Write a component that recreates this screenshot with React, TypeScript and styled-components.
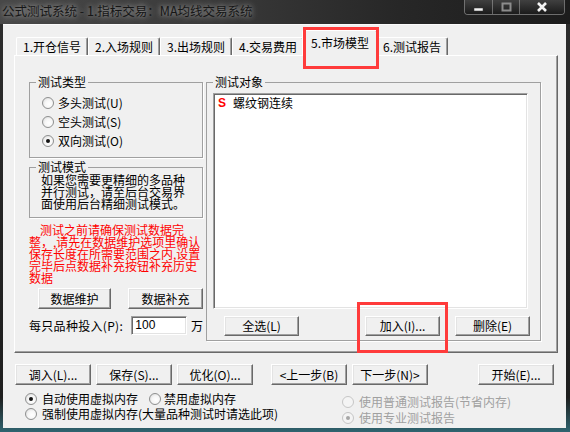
import React from 'react';
import styled, { createGlobalStyle } from 'styled-components';

const GlobalStyle = createGlobalStyle`
  html, body {
    margin: 0;
    padding: 0;
    background: #111;
  }
  body {
    font-family: "Noto Sans CJK SC", "Noto Sans", sans-serif;
    font-size: 12px;
    color: #000;
  }
  * {
    box-sizing: border-box;
  }
`;

const Window = styled.div`
  position: relative;
  width: 570px;
  height: 432px;
  display: flex;
  flex-direction: column;
  background: linear-gradient(180deg, #2d2d2d 0%, #1e1e1e 92%, #2f6470 100%);
  overflow: hidden;
`;

const TitleBar = styled.div`
  height: 24px;
  display: flex;
  align-items: flex-start;
  justify-content: space-between;
  background: linear-gradient(90deg, #484848 0%, #3b3b3b 35%, #272727 70%, #1c1c1c 100%);
`;

const Title = styled.div`
  padding: 2px 0 0 2px;
  font-size: 12.5px;
  line-height: 17px;
  color: #161616;
  white-space: nowrap;
  text-shadow: 0 0 5px rgba(255, 255, 255, 0.5), 0 0 10px rgba(255, 255, 255, 0.3);
`;

const Captions = styled.div`
  display: flex;
  height: 15px;
  margin-right: 5px;
  border: 1px solid rgba(190, 190, 190, 0.5);
  border-top: none;
  border-radius: 0 0 4px 4px;
  overflow: hidden;
`;

const CaptionButton = styled.div<{ $wide?: boolean }>`
  width: ${p => (p.$wide ? 45 : 27)}px;
  display: flex;
  align-items: center;
  justify-content: center;
  background: linear-gradient(180deg, #404040, #1b1b1b);

  & + & {
    border-left: 1px solid rgba(190, 190, 190, 0.45);
  }
`;

const Client = styled.div`
  flex: 1;
  margin: 0 4px 4px 3px;
  padding: 5px 9px 0 11px;
  background: #f0f0f0;
  border-top: 1px solid #fbfbfb;
  display: flex;
  flex-direction: column;
`;

const TabRow = styled.div`
  height: 25px;
  display: flex;
  align-items: flex-end;
  padding-left: 2px;
`;

const Tab = styled.div<{ $active?: boolean }>`
  position: relative;
  z-index: ${p => (p.$active ? 2 : 1)};
  width: ${p => (p.$active ? 76 : 72)}px;
  height: ${p => (p.$active ? 26 : 18)}px;
  margin: ${p => (p.$active ? '0 -2px -1px -2px' : '0')};
  padding-top: ${p => (p.$active ? 4 : 1)}px;
  display: flex;
  justify-content: center;
  align-items: flex-start;
  line-height: 16px;
  white-space: nowrap;
  background: #f0f0f0;
  border: 1px solid;
  border-color: #fff #696969 transparent #fff;
  border-bottom: none;
  border-radius: 2px 2px 0 0;
  box-shadow: inset -1px 0 #a0a0a0;
`;

const Panel = styled.div`
  width: 544px;
  height: 298px;
  display: flex;
  gap: 3px;
  padding: 20px 0 0 14px;
  border: 1px solid;
  border-color: #fff #696969 #696969 #fff;
  box-shadow: inset -1px -1px #a0a0a0;
`;

const LeftColumn = styled.div`
  width: 174px;
  display: flex;
  flex-direction: column;
`;

const Group = styled.fieldset<{ $w: number; $h: number; $mt?: number }>`
  margin: ${p => p.$mt ?? 0}px 0 0 0;
  padding: 0;
  min-width: 0;
  width: ${p => p.$w}px;
  height: ${p => p.$h}px;
  border: 1px solid #a0a0a0;
  box-shadow: 1px 1px 0 #fff;
`;

const Legend = styled.legend`
  margin-left: 6px;
  padding: 0 2px;
  font-size: 12px;
  line-height: 12px;
`;

const RadioList = styled.div`
  padding: 5px 0 0 12px;
  display: flex;
  flex-direction: column;
`;

const RadioRow = styled.div<{ $h?: number; $gap?: number }>`
  height: ${p => p.$h ?? 19}px;
  display: flex;
  align-items: center;
  gap: ${p => p.$gap ?? 4}px;
  white-space: nowrap;
`;

const RadioDot = styled.span<{ $checked?: boolean; $disabled?: boolean }>`
  position: relative;
  flex: none;
  width: 12px;
  height: 12px;
  border-radius: 50%;
  border: 1px solid ${p => (p.$disabled ? '#c6c6c6' : '#8e8f8f')};
  background: ${p =>
    p.$disabled
      ? '#f4f4f4'
      : 'radial-gradient(circle at 60% 60%, #ffffff 0%, #f6f6f6 45%, #d4d4d4 100%)'};

  &::after {
    content: '';
    display: ${p => (p.$checked ? 'block' : 'none')};
    position: absolute;
    left: 3px;
    top: 3px;
    width: 4px;
    height: 4px;
    border-radius: 50%;
    background: ${p => (p.$disabled ? '#a6a6a6' : '#141414')};
  }
`;

const RadioLabel = styled.span<{ $disabled?: boolean }>`
  line-height: 14px;
  color: ${p => (p.$disabled ? '#a0a0a0' : '#000')};
`;

const ModeText = styled.div`
  padding: 1px 0 0 11px;
  line-height: 12px;
  white-space: pre;
`;

const RedNote = styled.div`
  margin-top: 6px;
  color: #ff0000;
  line-height: 12px;
  white-space: pre;
`;

const Indent = styled.span`
  display: inline-block;
  width: 11px;
`;

const ButtonRow = styled.div<{ $gap: number; $pl?: number; $mt: number }>`
  display: flex;
  gap: ${p => p.$gap}px;
  padding-left: ${p => p.$pl ?? 0}px;
  margin-top: ${p => p.$mt}px;
`;

const Button = styled.div<{ $w: number; $h?: number; $ml?: number }>`
  width: ${p => p.$w}px;
  height: ${p => p.$h ?? 21}px;
  margin-left: ${p => p.$ml ?? 0}px;
  display: flex;
  align-items: center;
  justify-content: center;
  white-space: nowrap;
  line-height: 14px;
  background: #f0f0f0;
  border: 1px solid;
  border-color: #fff #696969 #696969 #fff;
  box-shadow: inset -1px -1px #a0a0a0, inset 1px 1px #e3e3e3;
`;

const InputRow = styled.div`
  margin-top: 7px;
  height: 19px;
  display: flex;
  align-items: center;
  white-space: nowrap;
`;

const InputLabel = styled.span`
  width: 98px;
  letter-spacing: 0.3px;
`;

const TextBox = styled.div`
  width: 56px;
  height: 19px;
  margin: 0 4px 0 5px;
  padding: 1px 0 0 3px;
  line-height: 14px;
  background: #fff;
  border: 1px solid;
  border-color: #a0a0a0 #fff #fff #a0a0a0;
  box-shadow: inset 1px 1px #696969, inset -1px -1px #e3e3e3;
  font-family: "Liberation Sans", sans-serif;
`;

const ObjectBody = styled.div`
  padding: 5px 0 0 6px;
  display: flex;
  flex-direction: column;
`;

const ListBox = styled.div`
  width: 315px;
  height: 216px;
  padding: 1px 4px;
  background: #fff;
  border: 1px solid;
  border-color: #a0a0a0 #fff #fff #a0a0a0;
  box-shadow: inset 1px 1px #696969, inset -1px -1px #e3e3e3;
`;

const ListItem = styled.div`
  height: 16px;
  display: flex;
  align-items: center;
  gap: 7px;
  line-height: 16px;
`;

const Mark = styled.span`
  color: #ff0000;
  font-family: "Liberation Sans", sans-serif;
  font-weight: bold;
  font-size: 12px;
`;

const BottomArea = styled.div`
  display: flex;
  margin-top: 6px;
`;

const OptionColumn = styled.div<{ $w?: number; $pt?: number; $pl?: number }>`
  width: ${p => (p.$w ? `${p.$w}px` : 'auto')};
  padding: ${p => p.$pt ?? 0}px 0 0 ${p => p.$pl ?? 0}px;
  display: flex;
  flex-direction: column;
`;

const Highlight = styled.div<{ $x: number; $y: number; $w: number; $h: number }>`
  position: absolute;
  left: ${p => p.$x}px;
  top: ${p => p.$y}px;
  width: ${p => p.$w}px;
  height: ${p => p.$h}px;
  border: 3px solid #ff3b3b;
  pointer-events: none;
  z-index: 5;
`;

const Radio: React.FC<{ label: string; checked?: boolean; disabled?: boolean; h?: number; gap?: number }> = ({
  label,
  checked,
  disabled,
  h,
  gap,
}) => (
  <RadioRow $h={h} $gap={gap}>
    <RadioDot $checked={checked} $disabled={disabled} />
    <RadioLabel $disabled={disabled}>{label}</RadioLabel>
  </RadioRow>
);

const tabs = ['1.开仓信号', '2.入场规则', '3.出场规则', '4.交易费用', '5.市场模型', '6.测试报告'];

const App: React.FC = () => {
  return (
    <Window>
      <GlobalStyle />
      <TitleBar>
        <Title>公式测试系统 - 1.指标交易：MA均线交易系统</Title>
        <Captions>
          <CaptionButton>
            <svg width="11" height="10" viewBox="0 0 11 10">
              <rect x="1" y="6" width="9" height="3" fill="#f2f2f2" stroke="#333" strokeWidth="0.5" />
            </svg>
          </CaptionButton>
          <CaptionButton>
            <svg width="11" height="10" viewBox="0 0 11 10">
              <rect x="1.5" y="1.5" width="8" height="7" fill="none" stroke="#8c8c8c" strokeWidth="2" />
            </svg>
          </CaptionButton>
          <CaptionButton $wide>
            <svg width="12" height="10" viewBox="0 0 12 10">
              <path d="M2 1 L10 9 M10 1 L2 9" stroke="#f4f4f4" strokeWidth="2.6" />
            </svg>
          </CaptionButton>
        </Captions>
      </TitleBar>

      <Client>
        <TabRow>
          {tabs.map((t, i) => (
            <Tab key={t} $active={i === 4}>
              {t}
            </Tab>
          ))}
        </TabRow>

        <Panel>
          <LeftColumn>
            <Group $w={174} $h={82}>
              <Legend>测试类型</Legend>
              <RadioList>
                <Radio label="多头测试(U)" />
                <Radio label="空头测试(S)" />
                <Radio label="双向测试(O)" checked />
              </RadioList>
            </Group>

            <Group $w={174} $h={57} $mt={3}>
              <Legend>测试模式</Legend>
              <ModeText>
                {'如果您需要更精细的多品种\n并行测试，请至后台交易界\n面使用后台精细测试模式。'}
              </ModeText>
            </Group>

            <RedNote>
              <Indent />
              {'测试之前请确保测试数据完\n整，,请先在数据维护选项里确认\n保存长度在所需要范围之内,设置\n完毕后点数据补充按钮补充历史\n数据'}
            </RedNote>

            <ButtonRow $gap={17} $pl={9} $mt={4}>
              <Button $w={73}>数据维护</Button>
              <Button $w={75}>数据补充</Button>
            </ButtonRow>

            <InputRow>
              <InputLabel>每只品种投入(P):</InputLabel>
              <TextBox>100</TextBox>万
            </InputRow>
          </LeftColumn>

          <Group $w={335} $h={265}>
            <Legend>测试对象</Legend>
            <ObjectBody>
              <ListBox>
                <ListItem>
                  <Mark>S</Mark>
                  螺纹钢连续
                </ListItem>
              </ListBox>
              <ButtonRow $gap={15} $pl={11} $mt={7}>
                <Button $w={75} $h={20}>全选(L)</Button>
                <Button $w={75} $h={20} $ml={51}>加入(I)...</Button>
                <Button $w={75} $h={20}>删除(E)</Button>
              </ButtonRow>
            </ObjectBody>
          </Group>
        </Panel>

        <ButtonRow $gap={5} $pl={1} $mt={11}>
          <Button $w={76}>调入(L)...</Button>
          <Button $w={76}>保存(S)...</Button>
          <Button $w={76}>优化(O)...</Button>
          <Button $w={76} $ml={13}>&lt;上一步(B)</Button>
          <Button $w={76}>下一步(N)&gt;</Button>
          <Button $w={76} $ml={45}>开始(E)...</Button>
        </ButtonRow>

        <BottomArea>
          <OptionColumn $w={328} $pl={11}>
            <RadioRow $h={15} $gap={11}>
              <Radio label="自动使用虚拟内存" checked h={15} gap={5} />
              <Radio label="禁用虚拟内存" h={15} gap={3} />
            </RadioRow>
            <Radio label="强制使用虚拟内存(大量品种测试时请选此项)" h={15} gap={5} />
          </OptionColumn>
          <OptionColumn $pt={3}>
            <Radio label="使用普通测试报告(节省内存)" disabled h={16} gap={5} />
            <Radio label="使用专业测试报告" disabled checked h={16} gap={5} />
          </OptionColumn>
        </BottomArea>
      </Client>

      <Highlight $x={303} $y={27} $w={76} $h={42} />
      <Highlight $x={357} $y={302} $w={91} $h={51} />
    </Window>
  );
};

export default App;
